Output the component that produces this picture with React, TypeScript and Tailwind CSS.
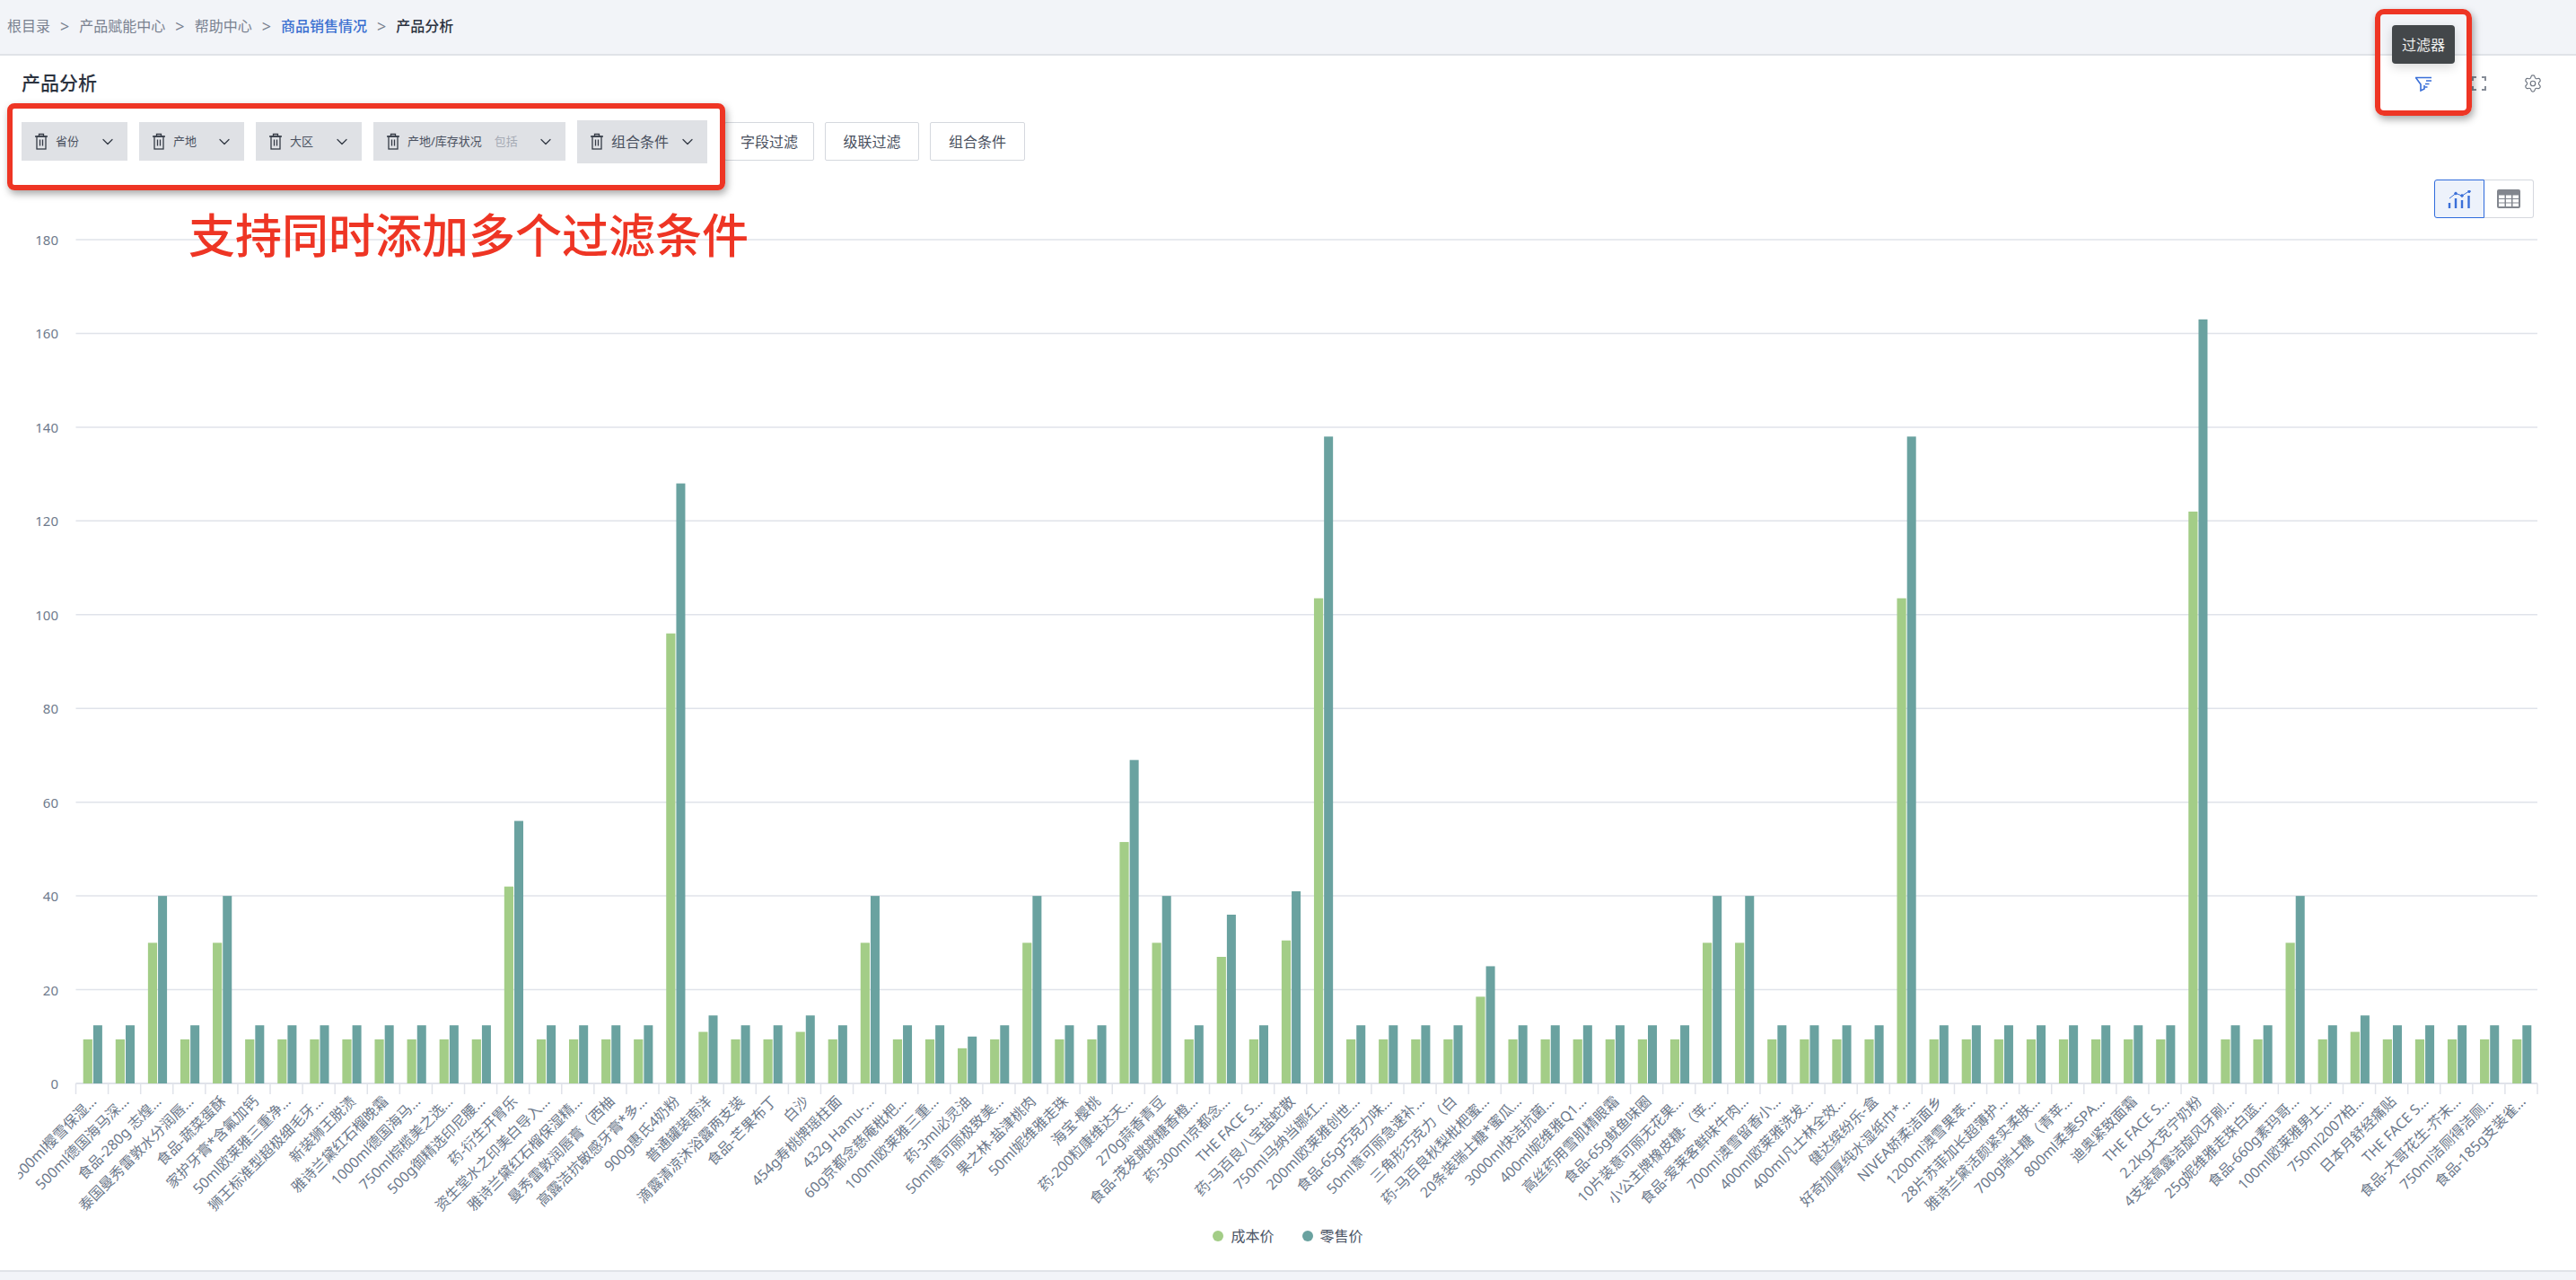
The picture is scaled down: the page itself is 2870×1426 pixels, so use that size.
import { ChevronDown, Settings } from 'lucide-react';

type Item = [string, number, number];

const LOW = 9.4;
const HIGH = 12.4;

const items: Item[] = [
  ['500ml樱雪保湿…', LOW, HIGH],
  ['500ml德国海马深…', LOW, HIGH],
  ['食品-280g 志煌…', 30, 40],
  ['泰国曼秀雷敦水分润唇…', LOW, HIGH],
  ['食品-蔬菜蛋酥', 30, 40],
  ['家护牙膏*含氟加钙', LOW, HIGH],
  ['50ml欧莱雅三重净…', LOW, HIGH],
  ['狮王标准型超极细毛牙…', LOW, HIGH],
  ['新装狮王脱渍', LOW, HIGH],
  ['雅诗兰黛红石榴晚霜', LOW, HIGH],
  ['1000ml德国海马…', LOW, HIGH],
  ['750ml棕榄美之选…', LOW, HIGH],
  ['500g御精选印尼腰…', LOW, HIGH],
  ['药-衍生开胃乐', 42, 56],
  ['资生堂水之印美白导入…', LOW, HIGH],
  ['雅诗兰黛红石榴保湿精…', LOW, HIGH],
  ['曼秀雷敦润唇膏（西柚', LOW, HIGH],
  ['高露洁抗敏感牙膏*多…', LOW, HIGH],
  ['900g惠氏4奶粉', 96, 128],
  ['普通罐装南洋', 11, 14.5],
  ['滴露清凉沐浴露两支装', LOW, HIGH],
  ['食品-芒果布丁', LOW, HIGH],
  ['白沙', 11, 14.5],
  ['454g寿桃牌瑶柱面', LOW, HIGH],
  ['432g Hamu-…', 30, 40],
  ['60g京都念慈庵枇杷…', LOW, HIGH],
  ['100ml欧莱雅三重…', LOW, HIGH],
  ['药-3ml必灵油', 7.5, 10],
  ['50ml意可丽极致美…', LOW, HIGH],
  ['果之林-盐津桃肉', 30, 40],
  ['50ml妮维雅走珠', LOW, HIGH],
  ['海宝-樱桃', LOW, HIGH],
  ['药-200粒康维达天…', 51.5, 69],
  ['270g蒜香青豆', 30, 40],
  ['食品-茂发跳跳糖香橙…', LOW, HIGH],
  ['药-300ml京都念…', 27, 36],
  ['THE FACE S…', LOW, HIGH],
  ['药-马百良八宝盐蛇散', 30.5, 41],
  ['750ml马纳当娜红…', 103.5, 138],
  ['200ml欧莱雅创世…', LOW, HIGH],
  ['食品-65g巧克力味…', LOW, HIGH],
  ['50ml意可丽急速补…', LOW, HIGH],
  ['三角形巧克力（白', LOW, HIGH],
  ['药-马百良秋梨枇杷蜜…', 18.5, 25],
  ['20条装瑞士糖*蜜瓜…', LOW, HIGH],
  ['3000ml快洁抗菌…', LOW, HIGH],
  ['400ml妮维雅Q1…', LOW, HIGH],
  ['高丝药用雪肌精眼霜', LOW, HIGH],
  ['食品-65g鱿鱼味圈', LOW, HIGH],
  ['10片装意可丽无花果…', LOW, HIGH],
  ['小公主牌橡皮糖-（苹…', 30, 40],
  ['食品-爱莱客鲜味牛肉…', 30, 40],
  ['700ml澳雪留香小…', LOW, HIGH],
  ['400ml欧莱雅洗发…', LOW, HIGH],
  ['400ml凡士林全效…', LOW, HIGH],
  ['健达缤纷乐-盒', LOW, HIGH],
  ['好奇加厚纯水湿纸巾*…', 103.5, 138],
  ['NIVEA娇柔洁面乡', LOW, HIGH],
  ['1200ml澳雪果萃…', LOW, HIGH],
  ['28片苏菲加长超薄护…', LOW, HIGH],
  ['雅诗兰黛活颜紧实柔肤…', LOW, HIGH],
  ['700g瑞士糖（青苹…', LOW, HIGH],
  ['800ml柔美SPA…', LOW, HIGH],
  ['迪奥紧致面霜', LOW, HIGH],
  ['THE FACE S…', LOW, HIGH],
  ['2.2kg大克宁奶粉', 122, 163],
  ['4支装高露洁旋风牙刷…', LOW, HIGH],
  ['25g妮维雅走珠白蓝…', LOW, HIGH],
  ['食品-660g素玛哥…', 30, 40],
  ['100ml欧莱雅男士…', LOW, HIGH],
  ['750ml2007柏…', 11, 14.5],
  ['日本月舒经痛贴', LOW, HIGH],
  ['THE FACE S…', LOW, HIGH],
  ['食品-大哥花生-芥末…', LOW, HIGH],
  ['750ml洁厕得洁厕…', LOW, HIGH],
  ['食品-185g支装雀…', LOW, HIGH],
];

const AXIS_LEFT = 84.5;
const AXIS_RIGHT = 2827;
const BASE_Y = 1207;
const UNIT = 5.222;
const STEP = (AXIS_RIGHT - AXIS_LEFT) / items.length;
const TICKS = [0, 20, 40, 60, 80, 100, 120, 140, 160, 180];

function BarChart() {
  return (
    <svg
      viewBox="20 250 2850 1115"
      className="block w-[2850px] h-[1115px] ml-[20px]"
      fontFamily='"Noto Sans", "Noto Sans CJK SC", sans-serif'
    >
      {TICKS.map((t) => (
        <g key={t}>
          <line
            x1={AXIS_LEFT}
            x2={AXIS_RIGHT}
            y1={BASE_Y - t * UNIT}
            y2={BASE_Y - t * UNIT}
            stroke="#e0e3ea"
            strokeWidth={t === 0 ? 2 : 1.5}
          />
          <text x={65} y={BASE_Y - t * UNIT + 6} textAnchor="end" fontSize={15} fill="#6e7a8c">
            {t}
          </text>
        </g>
      ))}
      {items.map(([label, cost, retail], i) => {
        const left = AXIS_LEFT + i * STEP;
        const center = left + STEP / 2;
        return (
          <g key={i}>
            <line x1={left} x2={left} y1={BASE_Y} y2={1219} stroke="#e0e3ea" strokeWidth={1.5} />
            <rect x={left + 8.2} y={BASE_Y - cost * UNIT} width={10.2} height={cost * UNIT} fill="#a3cd87" />
            <rect x={left + 19.4} y={BASE_Y - retail * UNIT} width={10} height={retail * UNIT} fill="#6aa2a0" />
            <text
              x={center + 6}
              y={1228}
              textAnchor="end"
              fontSize={16}
              fill="#6e7a8c"
              transform={`rotate(-45 ${center + 6} 1228)`}
            >
              {label}
            </text>
          </g>
        );
      })}
      <line x1={AXIS_RIGHT} x2={AXIS_RIGHT} y1={BASE_Y} y2={1219} stroke="#e0e3ea" strokeWidth={1.5} />
    </svg>
  );
}

function TrashIcon() {
  return (
    <svg width="16" height="19" viewBox="0 0 16 19" fill="none" stroke="#353b46" strokeWidth="1.3" className="shrink-0">
      <path d="M1 4h14M5.500 4V1.500h5V4" />
      <rect x="3" y="4" width="10" height="14" />
      <path d="M6.500 7.500v7M9.500 7.500v7" />
    </svg>
  );
}

function FilterChip({ label, extra, w }: { label: string; extra?: string; w: string }) {
  return (
    <div className={`flex items-center h-[43px] bg-[#dfe1e5] pl-[14px] pr-[12px] ${w}`}>
      <TrashIcon />
      <span className="ml-[8px] text-[13px] text-[#4a5160] whitespace-nowrap">{label}</span>
      {extra && <span className="ml-[14px] text-[13px] text-[#a6abb5] whitespace-nowrap">{extra}</span>}
      <ChevronDown size={20} strokeWidth={1.5} className="ml-auto text-[#353b46] shrink-0" />
    </div>
  );
}

function PlainButton({ label, w }: { label: string; w: string }) {
  return (
    <button className={`h-[43px] bg-white border border-[#d5d8de] rounded-[2px] text-[16px] text-[#4a5160] ${w}`}>
      {label}
    </button>
  );
}

function Crumb({ children, tone }: { children: string; tone: string }) {
  return <span className={tone}>{children}</span>;
}

export default function App() {
  return (
    <div
      className="relative w-[2870px] h-[1426px] flex flex-col overflow-hidden bg-white"
      style={{ fontFamily: '"Noto Sans", "Noto Sans CJK SC", sans-serif' }}
    >
      <header className="h-[62px] shrink-0 bg-[#f2f4f8] border-b-2 border-[#e0e3e8] flex items-start pt-[17px] pl-[8px] gap-[11px] text-[16px] leading-[24px]">
        <Crumb tone="text-[#7a8290]">根目录</Crumb>
        <span className="text-[#7a8290] text-[18px]">&gt;</span>
        <Crumb tone="text-[#7a8290]">产品赋能中心</Crumb>
        <span className="text-[#7a8290] text-[18px]">&gt;</span>
        <Crumb tone="text-[#7a8290]">帮助中心</Crumb>
        <span className="text-[#7a8290] text-[18px]">&gt;</span>
        <Crumb tone="text-[#3a6fd0] font-medium">商品销售情况</Crumb>
        <span className="text-[#7a8290] text-[18px]">&gt;</span>
        <Crumb tone="text-[#2c3340] font-medium">产品分析</Crumb>
      </header>

      <main className="flex-1 flex flex-col min-h-0">
        <div className="flex items-center justify-between h-[62px] pl-[24px] pr-[37px]">
          <h1 className="text-[21px] font-medium text-[#2c3340]">产品分析</h1>
          <div className="flex items-center">
            <svg width="20" height="17" viewBox="0 0 20 17" fill="none" stroke="#3a6fd8" strokeWidth="1.6">
              <path d="M1 1.500h18M1.500 1.500l5.500 7.500v7l4-2v-4" />
              <path d="M13 5h6M12 8.500h4.500M11.500 12h3" />
            </svg>
            <svg width="16" height="16" viewBox="0 0 16 16" fill="none" stroke="#868c97" strokeWidth="2" className="ml-[44px]">
              <path d="M1 5V1h4M11 1h4v4M15 11v4h-4M5 15H1v-4" />
            </svg>
            <Settings size={22} strokeWidth={1.3} className="ml-[41px] text-[#6f7682]" />
          </div>
        </div>

        <div className="flex items-center h-[67px] pl-[24px] gap-[13px]">
          <FilterChip label="省份" w="w-[118px]" />
          <FilterChip label="产地" w="w-[117px]" />
          <FilterChip label="大区" w="w-[118px]" />
          <FilterChip label="产地/库存状况" extra="包括" w="w-[214px]" />
          <div className="flex items-center h-[48px] w-[145px] bg-[#dfe1e5] pl-[14px] pr-[12px]">
            <TrashIcon />
            <span className="ml-[8px] text-[16px] text-[#4a5160] whitespace-nowrap">组合条件</span>
            <ChevronDown size={20} strokeWidth={1.5} className="ml-auto text-[#353b46]" />
          </div>
          <div className="flex gap-[12px] ml-[6px]">
            <PlainButton label="字段过滤" w="w-[100px]" />
            <PlainButton label="级联过滤" w="w-[105px]" />
            <PlainButton label="组合条件" w="w-[106px]" />
          </div>
        </div>

        <div className="flex justify-end h-[59px] pt-[9px] pr-[47px]">
          <div className="flex h-[43px]">
            <div className="w-[56px] flex items-center justify-center bg-[#edf2fb] border border-[#2f6bdc] rounded-l-[3px]">
              <svg width="26" height="20" viewBox="0 0 26 20" fill="none" stroke="#3a6fd8">
                <path d="M2 9l7-5.500 7 2.500 8-5" strokeWidth="1" />
                <path d="M2 14v6M9 9v11M16 11v9M23.500 6v14" strokeWidth="2.400" />
                <circle cx="9" cy="3.500" r="1.300" fill="#3a6fd8" />
                <circle cx="16" cy="6" r="1.300" fill="#3a6fd8" />
                <circle cx="24" cy="1.200" r="1.300" fill="#3a6fd8" />
              </svg>
            </div>
            <div className="w-[55px] flex items-center justify-center border border-l-0 border-[#d5d8de] rounded-r-[3px]">
              <svg width="26" height="21" viewBox="0 0 26 21">
                <rect width="26" height="21" rx="2" fill="#82868e" />
                <path
                  d="M2 6.500h6.500v3.500H2zM10 6.500h6v3.500h-6zM17.500 6.500H24v3.500h-6.500zM2 11h6.500v3.500H2zM10 11h6v3.500h-6zM17.500 11H24v3.500h-6.500zM2 15.500h6.500v3.500H2zM10 15.500h6v3.500h-6zM17.500 15.500H24v3.500h-6.500z"
                  fill="#fff"
                />
              </svg>
            </div>
          </div>
        </div>

        <BarChart />

        <div className="flex justify-center items-center gap-[31px] h-[24px] text-[16px] text-[#4a5365]">
          <div className="flex items-center gap-[8px]">
            <span className="w-[12px] h-[12px] rounded-full bg-[#a3cd87]" />
            成本价
          </div>
          <div className="flex items-center gap-[8px]">
            <span className="w-[12px] h-[12px] rounded-full bg-[#6aa2a0]" />
            零售价
          </div>
        </div>
      </main>

      <footer className="h-[11px] shrink-0 bg-[#f2f4f8] border-t-2 border-[#e0e3e8]" />

      {/* annotations drawn on top of the screenshot */}
      <div className="absolute left-[8px] top-[115px] w-[800px] h-[97px] border-[6px] border-[#ee3524] rounded-[8px] shadow-[2px_4px_8px_rgba(0,0,0,0.35)]" />
      <div className="absolute left-[210px] top-[226px] text-[52px] leading-[72px] font-medium text-[#ee3524] whitespace-nowrap">
        支持同时添加多个过滤条件
      </div>
      <div className="absolute left-[2665px] top-[28px] w-[70px] h-[43px] flex items-center justify-center bg-[#43474a] rounded-[4px] text-[16px] text-[#eeeeee] shadow-[0_4px_12px_rgba(0,0,0,0.15)]">
        过滤器
      </div>
      <div className="absolute left-[2646px] top-[10px] w-[108px] h-[119px] border-[6px] border-[#ee3524] rounded-[10px] shadow-[2px_4px_8px_rgba(0,0,0,0.35)]" />
    </div>
  );
}
